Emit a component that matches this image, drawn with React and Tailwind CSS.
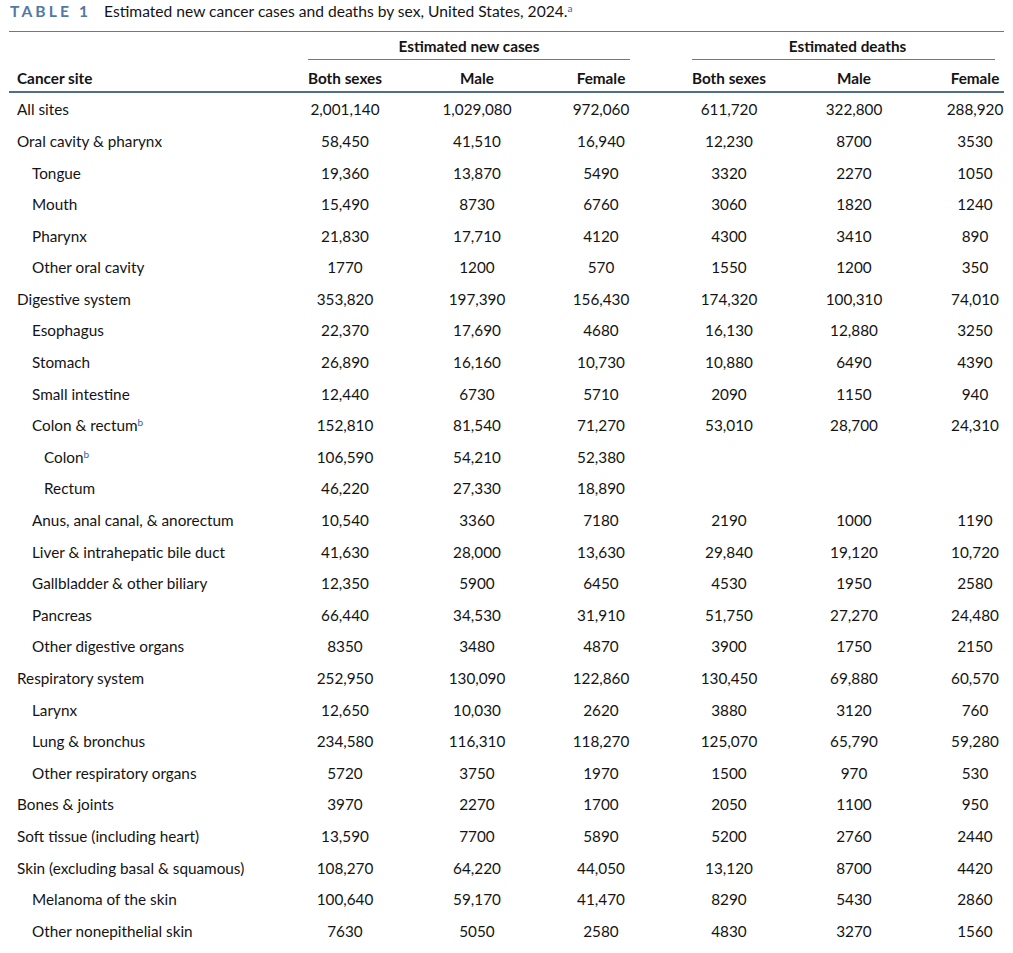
const rows = [
  { site: "All sites", lvl: 0, v: ["2,001,140", "1,029,080", "972,060", "611,720", "322,800", "288,920"] },
  { site: "Oral cavity & pharynx", lvl: 0, v: ["58,450", "41,510", "16,940", "12,230", "8700", "3530"] },
  { site: "Tongue", lvl: 1, v: ["19,360", "13,870", "5490", "3320", "2270", "1050"] },
  { site: "Mouth", lvl: 1, v: ["15,490", "8730", "6760", "3060", "1820", "1240"] },
  { site: "Pharynx", lvl: 1, v: ["21,830", "17,710", "4120", "4300", "3410", "890"] },
  { site: "Other oral cavity", lvl: 1, v: ["1770", "1200", "570", "1550", "1200", "350"] },
  { site: "Digestive system", lvl: 0, v: ["353,820", "197,390", "156,430", "174,320", "100,310", "74,010"] },
  { site: "Esophagus", lvl: 1, v: ["22,370", "17,690", "4680", "16,130", "12,880", "3250"] },
  { site: "Stomach", lvl: 1, v: ["26,890", "16,160", "10,730", "10,880", "6490", "4390"] },
  { site: "Small intestine", lvl: 1, v: ["12,440", "6730", "5710", "2090", "1150", "940"] },
  { site: "Colon & rectum", sup: "b", lvl: 1, v: ["152,810", "81,540", "71,270", "53,010", "28,700", "24,310"] },
  { site: "Colon", sup: "b", lvl: 2, v: ["106,590", "54,210", "52,380", "", "", ""] },
  { site: "Rectum", lvl: 2, v: ["46,220", "27,330", "18,890", "", "", ""] },
  { site: "Anus, anal canal, & anorectum", lvl: 1, v: ["10,540", "3360", "7180", "2190", "1000", "1190"] },
  { site: "Liver & intrahepatic bile duct", lvl: 1, v: ["41,630", "28,000", "13,630", "29,840", "19,120", "10,720"] },
  { site: "Gallbladder & other biliary", lvl: 1, v: ["12,350", "5900", "6450", "4530", "1950", "2580"] },
  { site: "Pancreas", lvl: 1, v: ["66,440", "34,530", "31,910", "51,750", "27,270", "24,480"] },
  { site: "Other digestive organs", lvl: 1, v: ["8350", "3480", "4870", "3900", "1750", "2150"] },
  { site: "Respiratory system", lvl: 0, v: ["252,950", "130,090", "122,860", "130,450", "69,880", "60,570"] },
  { site: "Larynx", lvl: 1, v: ["12,650", "10,030", "2620", "3880", "3120", "760"] },
  { site: "Lung & bronchus", lvl: 1, v: ["234,580", "116,310", "118,270", "125,070", "65,790", "59,280"] },
  { site: "Other respiratory organs", lvl: 1, v: ["5720", "3750", "1970", "1500", "970", "530"] },
  { site: "Bones & joints", lvl: 0, v: ["3970", "2270", "1700", "2050", "1100", "950"] },
  { site: "Soft tissue (including heart)", lvl: 0, v: ["13,590", "7700", "5890", "5200", "2760", "2440"] },
  { site: "Skin (excluding basal & squamous)", lvl: 0, v: ["108,270", "64,220", "44,050", "13,120", "8700", "4420"] },
  { site: "Melanoma of the skin", lvl: 1, v: ["100,640", "59,170", "41,470", "8290", "5430", "2860"] },
  { site: "Other nonepithelial skin", lvl: 1, v: ["7630", "5050", "2580", "4830", "3270", "1560"] },
];

const indent = ["pl-[8px]", "pl-[23px]", "pl-[35px]"];

function Cells({ values, bold }) {
  const w = ["w-[132px]", "w-[132px]", "w-[116px]", "w-[140px]", "w-[110px]", "w-[96px] pl-[36px]"];
  return values.map((val, i) => (
    <div key={i} className={`${w[i]} shrink-0 text-center ${bold ? "font-bold" : ""}`}>
      {val}
    </div>
  ));
}

export default function App() {
  return (
    <div
      className="w-[1013px] h-[953px] bg-white px-[9px] text-[#141414] text-[15.3px] overflow-hidden"
      style={{ fontFamily: "Lato, 'Open Sans', sans-serif" }}
    >
      {/* Caption */}
      <div className="h-[25px] flex items-end pb-[2px]">
        <span className="font-bold text-[#4f7aa3] tracking-[0.2em] text-[15.6px] ml-[1px]">TABLE 1</span>
        <span className="ml-[13px] text-[15.6px]">
          Estimated new cancer cases and deaths by sex, United States, 2024.
          <sup className="text-[#3a5bb0] text-[10px]">a</sup>
        </span>
      </div>
      <div className="mt-[6px] border-t border-[#5d7d99]" />

      {/* Group headers */}
      <div className="flex h-[28px] font-bold">
        <div className="w-[270px] shrink-0" />
        <div className="w-[380px] shrink-0 flex">
          <div className="ml-[29px] w-[322px] flex flex-col border-b border-[#5d7d99]">
            <div className="flex-1 flex items-center justify-center pt-[2px]">Estimated new cases</div>
          </div>
        </div>
        <div className="w-[346px] shrink-0 flex">
          <div className="ml-[33px] w-[303px] flex flex-col border-b border-[#5d7d99]">
            <div className="flex-1 flex items-center justify-center pt-[2px] pl-[8px]">Estimated deaths</div>
          </div>
        </div>
      </div>

      {/* Column headers */}
      <div className="flex items-center h-[33px] pt-[5px] font-bold border-b-2 border-[#4e6e8a]">
        <div className="w-[270px] shrink-0 pl-[8px]">Cancer site</div>
        <Cells values={["Both sexes", "Male", "Female", "Both sexes", "Male", "Female"]} bold />
      </div>

      {/* Body */}
      <div className="flex flex-col pt-[1px]">
        {rows.map((r) => (
          <div key={r.site} className="flex items-center h-[31.6px]">
            <div className={`w-[270px] shrink-0 ${indent[r.lvl]}`}>
              {r.site}
              {r.sup && <sup className="text-[#3a5bb0] text-[10px]">{r.sup}</sup>}
            </div>
            <Cells values={r.v} />
          </div>
        ))}
      </div>
    </div>
  );
}
